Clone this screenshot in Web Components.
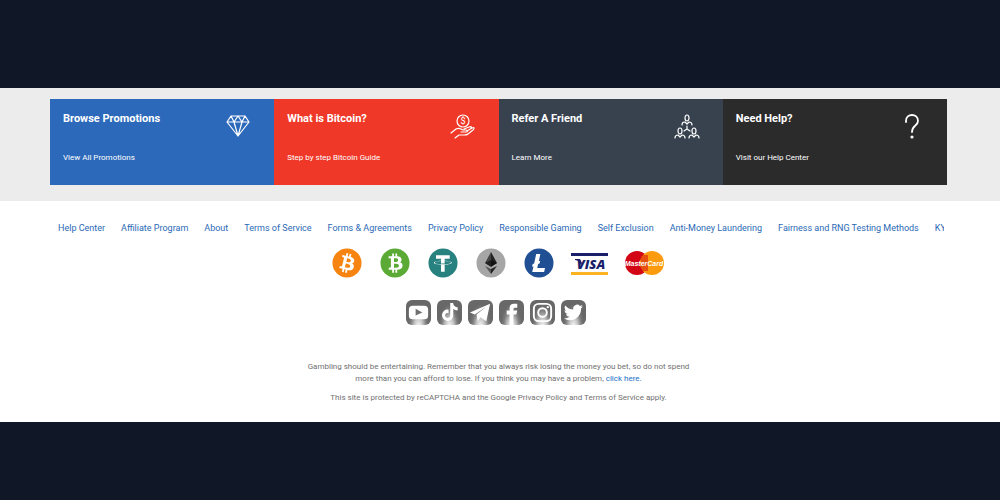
<!DOCTYPE html>
<html lang="en">
<head>
<meta charset="utf-8">
<meta name="viewport" content="width=device-width, initial-scale=1">
<title>Footer</title>
<style>
    body {
        margin: 0;
        background: #101827;
        font-family: Roboto, "Liberation Sans", sans-serif;
    }
</style>
</head>
<body>
<site-footer></site-footer>

<script>
const promoIcons = {
    diamond: `<path d="M6 2h14l4 6-11 14L2 8zM2 8h22M6 2l3 6 4-6 4 6 3-6M9 8l4 14 4-14"/>`,
    hand: `
        <circle cx="13" cy="7" r="6"/>
        <text x="13" y="10" text-anchor="middle" font-size="9" fill="#fff" stroke="none">$</text>
        <path d="M1 19l5-4c2-1 3-1 5 0l2 1h3c2 0 2 2 0 2h-5M17 17l5-3c2-1 3 0 1 2l-5 4c-1 1-2 1-4 1H9l-4 3M14 15l5-2c2-1 3 0 2 1"/>`,
    friends: `
        <ellipse cx="13" cy="4" rx="2" ry="3"/><path d="M8 11c0-3 2-3 3-3l2 2 2-2c1 0 3 0 3 3M13 12v3l-3 2M13 15l3 2"/>
        <ellipse cx="6" cy="17" rx="2" ry="3"/><path d="M1 24c0-3 2-3 3-3l2 2 2-2c1 0 3 0 3 3"/>
        <ellipse cx="20" cy="17" rx="2" ry="3"/><path d="M15 24c0-3 2-3 3-3l2 2 2-2c1 0 3 0 3 3"/>`,
    question: `<path stroke-width="1.8" d="M8 8V7c0-8 12-8 12 0 0 5-6 4-6 11"/><circle cx="14" cy="23" r="1" fill="#fff"/>`
};

const bitcoinMark = `<path fill="#fff" d="M23.189 14.02c.314-2.096-1.283-3.223-3.465-3.975l.708-2.84-1.728-.43-.69 2.765c-.454-.114-.92-.22-1.385-.326l.695-2.783L15.596 6l-.708 2.839c-.376-.086-.746-.17-1.104-.26l.002-.009-2.384-.595-.46 1.846s1.283.294 1.256.312c.7.175.826.638.805 1.006l-.806 3.235c.048.012.11.03.18.057l-.183-.045-1.13 4.532c-.086.212-.303.531-.793.41.018.025-1.256-.313-1.256-.313l-.858 1.978 2.25.561c.418.105.828.215 1.231.318l-.715 2.872 1.727.43.708-2.84c.472.127.93.245 1.378.357l-.706 2.828 1.728.43.715-2.866c2.948.558 5.164.333 6.097-2.333.752-2.146-.037-3.385-1.588-4.192 1.13-.26 1.98-1.003 2.207-2.538zm-3.95 5.538c-.533 2.147-4.148.986-5.32.695l.95-3.805c1.172.293 4.929.872 4.37 3.11zm.535-5.569c-.487 1.953-3.495.96-4.47.717l.86-3.45c.975.243 4.118.696 3.61 2.733z"/>`;

const paymentLogos = {
    bitcoin: `<circle cx="16" cy="16" r="14.5" fill="#f78410"/>${bitcoinMark}`,
    cash: `<circle cx="16" cy="16" r="14.5" fill="#5aaa35"/><g transform="rotate(-14 16 16)">${bitcoinMark}</g>`,
    tether: `
        <circle cx="16" cy="16" r="14.5" fill="#26817f"/>
        <path fill="#fff" transform="translate(1 1) scale(.93)" d="M17.922 17.383v-.002c-.11.008-.677.042-1.942.042-1.01 0-1.721-.03-1.971-.042v.003c-3.888-.171-6.79-.848-6.79-1.658 0-.809 2.902-1.486 6.79-1.66v2.644c.254.018.982.061 1.988.061 1.207 0 1.812-.05 1.925-.06v-2.643c3.88.173 6.775.85 6.775 1.658 0 .81-2.895 1.485-6.775 1.657m0-3.59v-2.366h5.414V7.819H8.595v3.608h5.414v2.365c-4.4.202-7.709 1.074-7.709 2.118 0 1.044 3.309 1.915 7.709 2.118v7.582h3.913v-7.584c4.393-.202 7.694-1.073 7.694-2.116 0-1.043-3.301-1.914-7.694-2.117"/>`,
    ethereum: `
        <circle cx="16" cy="16" r="14.5" fill="#a6a6a6"/>
        <path fill="#444" d="M16 5v14l-6-3z"/><path fill="#222" d="M16 5v14l6-3z"/>
        <path fill="#222" d="M10 16l6-3v7z"/><path fill="#111" d="M22 16l-6-3v7z"/>
        <path fill="#555" d="M10 19l6 3v5z"/><path fill="#222" d="M22 19l-6 3v5z"/>`,
    litecoin: `
        <circle cx="16" cy="16" r="14.5" fill="#204f94"/>
        <path fill="#fff" d="M10.427 19.214L9 19.768l.688-2.759 1.444-.58L13.213 7h4.129l-1.519 7.196 1.41-.571-.68 2.75-1.427.571-.848 4.083H22L21.127 25H9.252z"/>`,
    visa: `
        <path fill="#1a1f6b" d="M0 6h37v3H0z"/><path fill="#fbb321" d="M0 25h37v3H0z"/>
        <path fill="#1a1f6b" d="M4 12h5l2 4-1 3c-1-4-3-6-6-6z"/>
        <text x="20" y="22" text-anchor="middle" font-family="Open Sans" font-size="13" font-weight="800" font-style="italic" fill="#1a1f6b">VISA</text>`,
    mastercard: `
        <circle cx="13" cy="16" r="12" fill="#d30615"/><circle cx="28" cy="16" r="12" fill="#fb9b0d"/>
        <path stroke="#d30615" d="M18 9h6M17 11h7M17 13h7M17 15h7M17 17h7M17 19h7M17 21h7M18 23h6"/>
        <text x="20" y="19" text-anchor="middle" font-family="Liberation Sans" font-size="7" font-weight="700" font-style="italic" fill="#fff">MasterCard</text>`
};

const socialLogos = {
    youtube: `<rect x="3" y="6" width="20" height="14" rx="4"/><path fill="#707070" d="M10 9v7l7-3z"/>`,
    tiktok: `<path transform="translate(4 3) scale(.78)" d="M12.525.02c1.31-.02 2.61-.01 3.91-.02.08 1.53.63 3.09 1.75 4.17 1.12 1.11 2.7 1.62 4.24 1.79v4.03c-1.44-.05-2.89-.35-4.2-.97-.57-.26-1.1-.59-1.62-.93-.01 2.92.01 5.84-.02 8.75-.08 1.4-.54 2.79-1.35 3.94-1.31 1.92-3.58 3.17-5.91 3.21-1.43.08-2.86-.31-4.08-1.03-2.02-1.19-3.44-3.37-3.65-5.71-.02-.5-.03-1-.01-1.49.18-1.9 1.12-3.72 2.58-4.96 1.66-1.44 3.98-2.13 6.15-1.72.02 1.48-.04 2.96-.04 4.44-.99-.32-2.15-.23-3.02.37-.63.41-1.11 1.04-1.36 1.75-.21.51-.15 1.07-.14 1.61.24 1.64 1.82 3.02 3.5 2.87 1.12-.01 2.19-.66 2.77-1.61.19-.33.4-.67.41-1.06.1-1.79.06-3.57.07-5.36.01-4.03-.01-8.05.02-12.07z"/>`,
    telegram: `<path d="M2 13L23 4l-4 18-6-4-3 4-1-7 10-8L7 15z"/>`,
    facebook: `<path d="M11 26V15H8v-4h3V9c0-4 2-5 5-5h3v4h-2c-1 0-2 0-2 2v1h4l-1 4h-3v11z"/>`,
    instagram: `<g fill="none" stroke="#fff" stroke-width="2"><rect x="4" y="4" width="18" height="18" rx="5"/><circle cx="13" cy="13" r="4.5"/></g><circle cx="18.500" cy="7.500" r="1.200"/>`,
    twitter: `<path transform="translate(3 3) scale(.83)" d="M23.953 4.57a10 10 0 01-2.825.775 4.958 4.958 0 002.163-2.723c-.951.555-2.005.959-3.127 1.184a4.92 4.92 0 00-8.384 4.482C7.69 8.095 4.067 6.13 1.64 3.162a4.822 4.822 0 00-.666 2.475c0 1.71.87 3.213 2.188 4.096a4.904 4.904 0 01-2.228-.616v.06a4.923 4.923 0 003.946 4.827 4.996 4.996 0 01-2.212.085 4.936 4.936 0 004.604 3.417 9.867 9.867 0 01-6.102 2.105c-.39 0-.779-.023-1.17-.067a13.995 13.995 0 007.557 2.209c9.053 0 13.998-7.496 13.998-13.985 0-.21 0-.42-.015-.63A9.935 9.935 0 0024 4.59z"/>`
};

/**
 * Promo tile: title, link and an outline icon
 */
class PromoCard extends HTMLElement {
    constructor() {
        super();
        const shadowRoot = this.attachShadow({ mode: "open" });
        shadowRoot.innerHTML = `
            <style>
                :host {
                    display: flex;
                    justify-content: space-between;
                    align-items: flex-start;
                    box-sizing: border-box;
                    min-height: 86px;
                    padding: 13px 23px 20px 13px;
                    color: #fff;
                }

                h2 {
                    margin: 0 0 26px;
                    font-size: 11px;
                    line-height: 14px;
                    font-weight: 700;
                }

                a {
                    display: block;
                    font-size: 8px;
                    line-height: 12px;
                    color: inherit;
                    text-decoration: none;
                }

                svg {
                    display: block;
                    margin-top: 2px;
                    fill: none;
                    stroke: #fff;
                    stroke-width: 1.2;
                    stroke-linejoin: round;
                    stroke-linecap: round;
                }
            </style>
            <div>
                <h2><slot name="title"></slot></h2>
                <a href="#"><slot></slot></a>
            </div>
            <svg width="26" height="26" viewBox="0 0 26 26" aria-hidden="true">${promoIcons[this.getAttribute("icon")]}</svg>
        `;
    }
}

/**
 * Row of accepted payment methods
 */
class PaymentMethods extends HTMLElement {
    constructor() {
        super();
        const shadowRoot = this.attachShadow({ mode: "open" });
        shadowRoot.innerHTML = `
            <style>
                :host {
                    display: flex;
                    justify-content: center;
                    gap: 16px;
                    padding-right: 2px;
                }
            </style>
            ${Object.entries(paymentLogos).map(([name, logo]) => {
                const width = { visa: 37, mastercard: 41 }[name] || 32;
                return `<svg width="${width}" height="32" viewBox="0 0 ${width} 32" role="img" aria-label="${name}">${logo}</svg>`;
            }).join("")}
        `;
    }
}

/**
 * Row of social network buttons
 */
class SocialLinks extends HTMLElement {
    constructor() {
        super();
        const shadowRoot = this.attachShadow({ mode: "open" });
        shadowRoot.innerHTML = `
            <style>
                :host {
                    display: flex;
                    justify-content: center;
                }

                a {
                    margin-right: 6px;
                    border-radius: 6px;
                    background: radial-gradient(ellipse at 50% 110%, #fff 0, #c4c4c4 25%, #7c7c7c 45%, #686868 60%);
                }

                svg {
                    display: block;
                    fill: #fff;
                }
            </style>
            ${Object.entries(socialLogos).map(([name, logo]) => `
                <a href="#" aria-label="${name}"><svg width="25" height="25" viewBox="0 0 26 26">${logo}</svg></a>
            `).join("")}
        `;
    }
}

/**
 * Single line of links, clipped where it runs out of room
 */
class FooterLinks extends HTMLElement {
    constructor() {
        super();
        const shadowRoot = this.attachShadow({ mode: "open" });
        shadowRoot.innerHTML = `
            <style>
                :host {
                    display: block;
                    margin-right: 3px;
                    overflow: hidden;
                }

                nav {
                    display: flex;
                    gap: 16px;
                    padding-left: 8px;
                    white-space: nowrap;
                }

                ::slotted(a) {
                    flex: none;
                    font-size: 9px;
                    line-height: 14px;
                    color: #2a69b5;
                    text-decoration: none;
                }
            </style>
            <nav><slot></slot></nav>
        `;
    }
}

const template = document.createElement("template");
template.innerHTML = `
    <style>
        :host {
            display: block;
            padding: 88px 0 78px;
        }

        footer {
            background: #fff;
        }

        .promos {
            display: grid;
            grid-template-columns: repeat(4, 1fr);
            padding: 11px 53px 16px 50px;
            background: #ececec;
        }

        .blue { background: #2c69ba; }
        .red { background: #f03828; }
        .slate { background: #38424f; }
        .black { background: #2b2b2b; }

        .content {
            padding: 20px 53px 18px 50px;
        }

        payment-methods {
            margin-top: 12px;
        }

        social-links {
            margin: 21px 0 36px;
        }

        p {
            max-width: 400px;
            margin: 0 auto 7px;
            text-align: center;
            font-size: 8px;
            line-height: 12px;
            color: #707070;
        }

        p:last-child {
            margin-bottom: 0;
        }

        p a {
            color: #1b6fc8;
            text-decoration: none;
        }
    </style>

    <footer>
        <div class="promos">
            <promo-card class="blue" icon="diamond"><span slot="title">Browse Promotions</span>View All Promotions</promo-card>
            <promo-card class="red" icon="hand"><span slot="title">What is Bitcoin?</span>Step by step Bitcoin Guide</promo-card>
            <promo-card class="slate" icon="friends"><span slot="title">Refer A Friend</span>Learn More</promo-card>
            <promo-card class="black" icon="question"><span slot="title">Need Help?</span>Visit our Help Center</promo-card>
        </div>
        <div class="content">
            <footer-links>
                <a href="#">Help Center</a>
                <a href="#">Affiliate Program</a>
                <a href="#">About</a>
                <a href="#">Terms of Service</a>
                <a href="#">Forms &amp; Agreements</a>
                <a href="#">Privacy Policy</a>
                <a href="#">Responsible Gaming</a>
                <a href="#">Self Exclusion</a>
                <a href="#">Anti-Money Laundering</a>
                <a href="#">Fairness and RNG Testing Methods</a>
                <a href="#">KY</a>
            </footer-links>
            <payment-methods></payment-methods>
            <social-links></social-links>
            <p>Gambling should be entertaining. Remember that you always risk losing the money you bet, so do not spend more than you can afford to lose. If you think you may have a problem, <a href="#">click here.</a></p>
            <p>This site is protected by reCAPTCHA and the Google Privacy Policy and Terms of Service apply.</p>
        </div>
    </footer>
`;

class SiteFooter extends HTMLElement {
    constructor() {
        super();
        const shadowRoot = this.attachShadow({ mode: "open" });
        shadowRoot.appendChild(template.content.cloneNode(true));
    }
}

window.customElements.define("site-footer", SiteFooter);
window.customElements.define("promo-card", PromoCard);
window.customElements.define("payment-methods", PaymentMethods);
window.customElements.define("social-links", SocialLinks);
window.customElements.define("footer-links", FooterLinks);
</script>
</body>
</html>
